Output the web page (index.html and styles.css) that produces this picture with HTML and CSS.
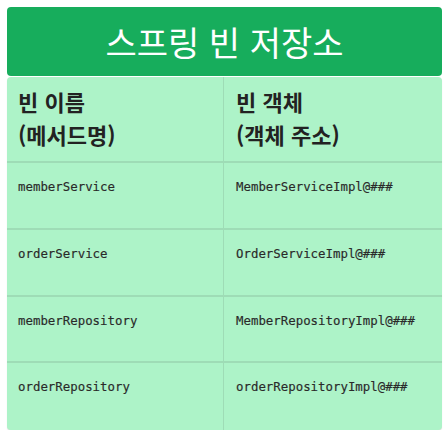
FILE: index.html
```html
<!DOCTYPE html>
<html lang="ko">
<head>
<meta charset="utf-8">
<link rel="stylesheet" href="styles.css">
</head>
<body>
<div class="wrap">
  <div class="title">스프링 빈 저장소</div>
  <div class="table">
    <div class="cell head">빈 이름<br>(메서드명)</div>
    <div class="cell head right">빈 객체<br>(객체 주소)</div>
    <div class="cell">memberService</div>
    <div class="cell right">MemberServiceImpl@###</div>
    <div class="cell">orderService</div>
    <div class="cell right">OrderServiceImpl@###</div>
    <div class="cell">memberRepository</div>
    <div class="cell right">MemberRepositoryImpl@###</div>
    <div class="cell last">orderRepository</div>
    <div class="cell right last">orderRepositoryImpl@###</div>
  </div>
</div>
</body>
</html>
```
FILE: styles.css
```css
html, body { margin: 0; padding: 0; background: #ffffff; }
.wrap { padding: 7px 5px 0 7px; width: 435px; }
.title {
  height: 69px;
  background: #17ad5c;
  border-radius: 4px;
  color: #ffffff;
  font-family: "Noto Sans CJK KR", sans-serif;
  font-size: 34px;
  font-weight: 400;
  display: flex;
  align-items: center;
  justify-content: center;
}
.table {
  margin-top: 1px;
  background: #adf3c8;
  border-radius: 4px;
  display: grid;
  grid-template-columns: 217px 218px;
  grid-template-rows: 86px 67px 67px 66px 67px;
  box-shadow: 0 1px 1px rgba(0,0,0,0.12);
}
.cell {
  border-bottom: 2px solid #9edcb6;
  border-right: 1px solid #9edcb6;
  padding: 16px 0 0 11px;
  font-family: "DejaVu Sans Mono", monospace;
  font-size: 12.4px;
  font-weight: 400;
  -webkit-text-stroke: 0.15px #2a2a2a;
  color: #2a2a2a;
  box-sizing: border-box;
}
.cell.right { border-right: none; padding-left: 12px; }
.cell.last { border-bottom: none; }
.cell.head {
  font-family: "Noto Sans CJK KR", sans-serif;
  font-weight: 700;
  font-size: 22px;
  line-height: 33px;
  padding-top: 8px;
  -webkit-text-stroke: 0;
  color: #222222;
}
```
